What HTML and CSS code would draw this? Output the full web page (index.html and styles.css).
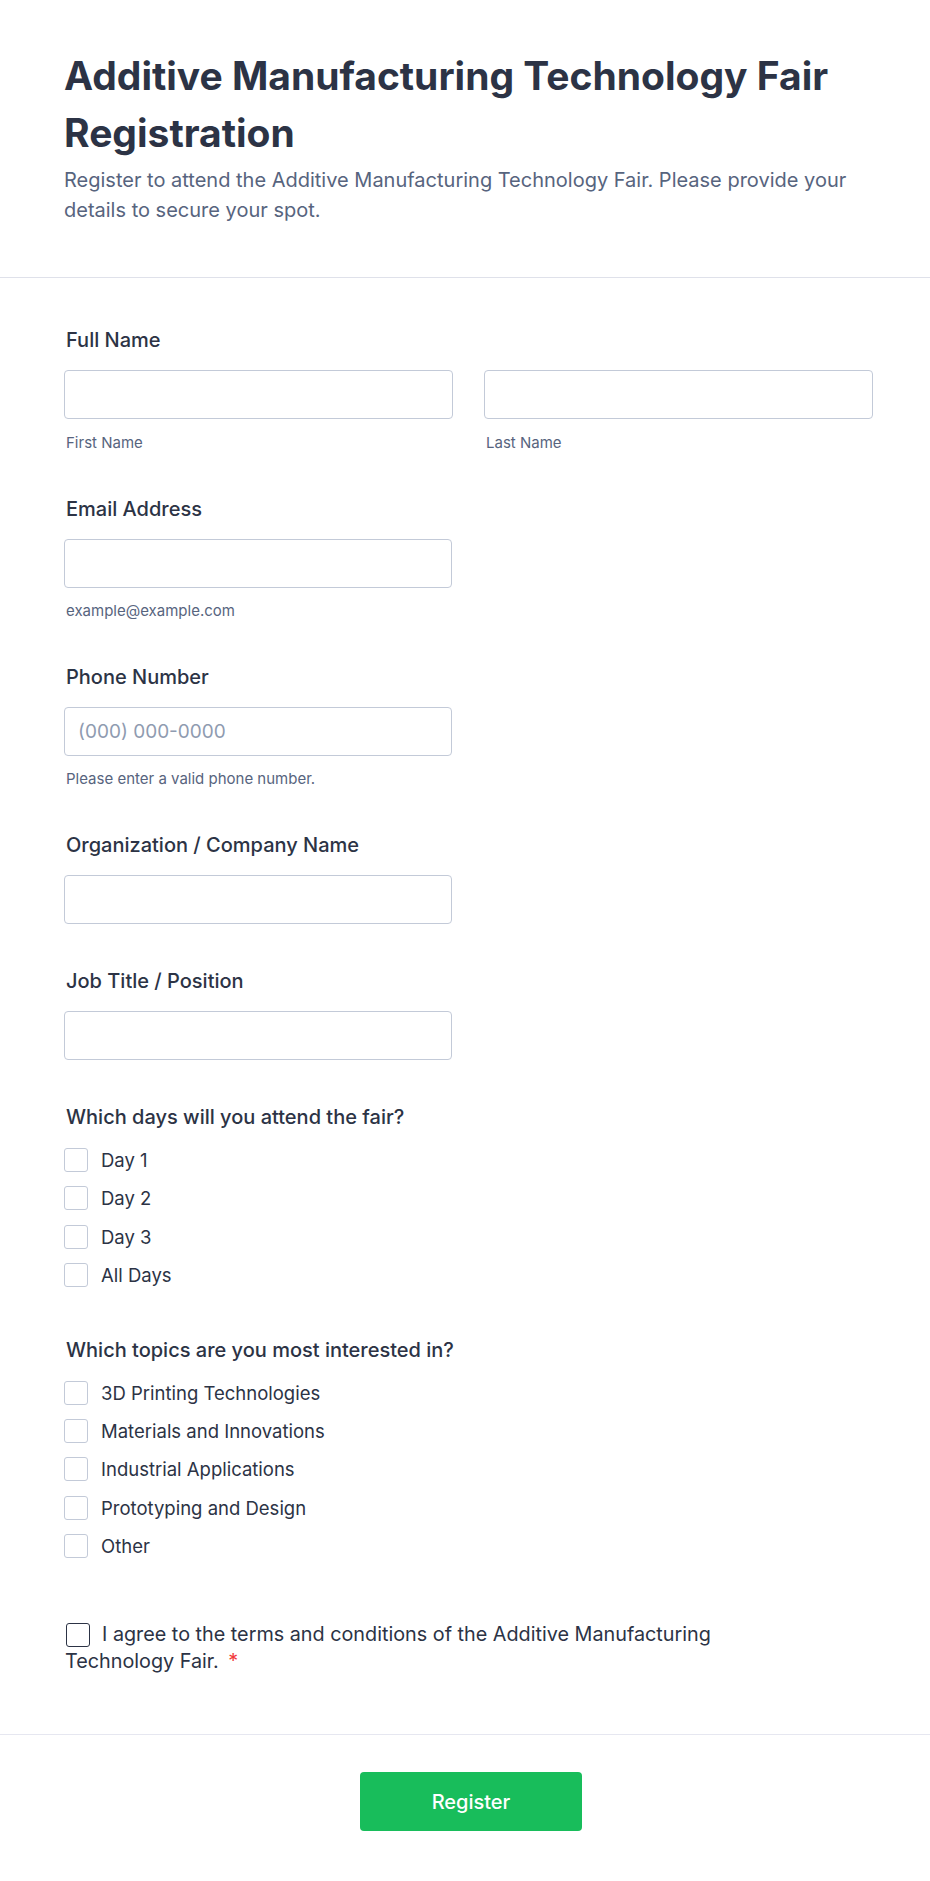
FILE: index.html
```html
<!DOCTYPE html>
<html lang="en">
<head>
<meta charset="utf-8">
<title>Additive Manufacturing Technology Fair Registration</title>
<link rel="stylesheet" href="styles.css">
</head>
<body>
<form class="form">
  <header class="form-header">
    <h1 class="form-title">Additive Manufacturing Technology Fair Registration</h1>
    <p class="form-subtitle">Register to attend the Additive Manufacturing Technology Fair. Please provide your details to secure your spot.</p>
  </header>

  <div class="form-body">
    <div class="field field-name">
      <label class="field-label">Full Name</label>
      <div class="name-grid">
        <div class="sub-field">
          <input class="text-input" type="text">
          <span class="sublabel">First Name</span>
        </div>
        <div class="sub-field">
          <input class="text-input" type="text">
          <span class="sublabel">Last Name</span>
        </div>
      </div>
    </div>

    <div class="field">
      <label class="field-label">Email Address</label>
      <div class="sub-field half">
        <input class="text-input" type="email">
        <span class="sublabel">example@example.com</span>
      </div>
    </div>

    <div class="field">
      <label class="field-label">Phone Number</label>
      <div class="sub-field half">
        <input class="text-input" type="tel" placeholder="(000) 000-0000">
        <span class="sublabel">Please enter a valid phone number.</span>
      </div>
    </div>

    <div class="field">
      <label class="field-label">Organization / Company Name</label>
      <div class="sub-field half">
        <input class="text-input" type="text">
      </div>
    </div>

    <div class="field">
      <label class="field-label">Job Title / Position</label>
      <div class="sub-field half">
        <input class="text-input" type="text">
      </div>
    </div>

    <div class="field field-choices">
      <label class="field-label">Which days will you attend the fair?</label>
      <div class="choices">
        <div class="choice"><span class="box"></span><span class="choice-text">Day 1</span></div>
        <div class="choice"><span class="box"></span><span class="choice-text">Day 2</span></div>
        <div class="choice"><span class="box"></span><span class="choice-text">Day 3</span></div>
        <div class="choice"><span class="box"></span><span class="choice-text">All Days</span></div>
      </div>
    </div>

    <div class="field field-choices">
      <label class="field-label">Which topics are you most interested in?</label>
      <div class="choices">
        <div class="choice"><span class="box"></span><span class="choice-text">3D Printing Technologies</span></div>
        <div class="choice"><span class="box"></span><span class="choice-text">Materials and Innovations</span></div>
        <div class="choice"><span class="box"></span><span class="choice-text">Industrial Applications</span></div>
        <div class="choice"><span class="box"></span><span class="choice-text">Prototyping and Design</span></div>
        <div class="choice"><span class="box"></span><span class="choice-text">Other</span></div>
      </div>
    </div>

    <div class="terms">
      <span class="terms-box"></span>I agree to the terms and conditions of the Additive Manufacturing Technology Fair. <span class="required">*</span>
    </div>
  </div>

  <footer class="form-footer">
    <button type="button" class="submit">Register</button>
  </footer>
</form>
</body>
</html>
```

FILE: styles.css
```css
* {
  box-sizing: border-box;
}

body {
  margin: 0;
  background: #ffffff;
  font-family: "Inter", "Noto Sans", "Liberation Sans", sans-serif;
  color: #2c3345;
}

.form {
  display: flex;
  flex-direction: column;
}

.form-header {
  padding: 47px 64px 52px 64px;
  border-bottom: 1px solid #dfe1ea;
}

.form-title {
  margin: 0;
  font-size: 39px;
  line-height: 57px;
  font-weight: 700;
  color: #2c3345;
}

.form-subtitle {
  margin: 4px 0 0 0;
  font-size: 20px;
  line-height: 30px;
  font-weight: 400;
  color: #57647e;
}

.form-body {
  padding: 49px 52px 59px 64px;
  border-bottom: 1px solid #e6e7f0;
}

.field {
  display: flex;
  flex-direction: column;
  margin-bottom: 44px;
}

.field-name .sublabel {
  margin-top: 15px;
}

.field-label {
  font-size: 20px;
  line-height: 27px;
  font-weight: 500;
  color: #2c3345;
  margin-bottom: 16px;
  padding-left: 2px;
}

.name-grid {
  display: grid;
  grid-template-columns: 389px 389px;
  gap: 31px;
}

.sub-field {
  display: flex;
  flex-direction: column;
}

.sub-field.half {
  width: 388px;
}

.text-input {
  height: 49px;
  width: 100%;
  border: 1px solid #c3cad8;
  border-radius: 4px;
  padding: 0 13px;
  font-family: inherit;
  font-size: 19px;
  color: #2c3345;
  background: #fff;
  outline: none;
}

.text-input::placeholder {
  color: #8f9bb0;
}

.sublabel {
  margin-top: 14px;
  font-size: 15px;
  line-height: 18px;
  color: #57647e;
  padding-left: 2px;
}

.field-choices {
  margin-bottom: 50px;
}

.field-choices .field-label {
  margin-bottom: 17px;
}

.field-choices + .field-choices {
  margin-bottom: 63px;
}

.choices {
  display: flex;
  flex-direction: column;
  gap: 14.3px;
}

.choice {
  display: flex;
  align-items: center;
  gap: 13px;
  height: 24px;
}

.choice-text {
  font-size: 18.5px;
  line-height: 24px;
  color: #2c3345;
}

.box {
  width: 24px;
  height: 24px;
  border: 1px solid #c3cad8;
  border-radius: 3px;
  background: #fff;
  flex: none;
}

.terms {
  font-size: 19.8px;
  line-height: 27px;
  color: #2c3345;
  max-width: 700px;
  padding-left: 1px;
}

.terms-box {
  display: inline-block;
  width: 24px;
  height: 24px;
  border: 1.5px solid #2c3345;
  border-radius: 3px;
  vertical-align: -6px;
  margin: 0 12px 0 1px;
}

.required {
  color: #f23a3c;
  margin-left: 4px;
}

.form-footer {
  display: flex;
  justify-content: center;
  padding: 37px 52px 50px 64px;
}

.submit {
  width: 222px;
  height: 59px;
  border: none;
  border-radius: 4px;
  background: #18bd5b;
  color: #ffffff;
  font-family: inherit;
  font-size: 20px;
  font-weight: 500;
}
```
